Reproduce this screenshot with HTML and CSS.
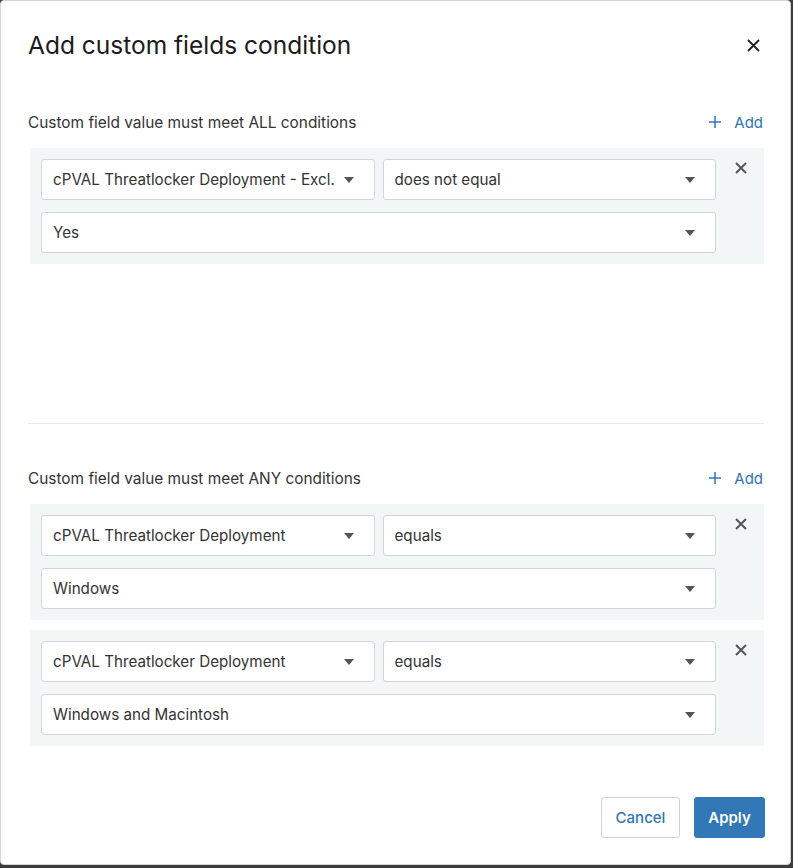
FILE: index.html
```html
<!DOCTYPE html>
<html>
<head>
<meta charset="utf-8">
<link rel="stylesheet" href="styles.css">
</head>
<body>
<div class="dialog">
  <div class="header">
    <h1 class="title">Add custom fields condition</h1>
    <button class="close" aria-label="Close">
      <svg width="13" height="13" viewBox="0 0 13 13"><path d="M1 1L12 12M12 1L1 12" stroke="#222" stroke-width="1.8" fill="none"/></svg>
    </button>
  </div>

  <section class="section section-all">
    <div class="section-head">
      <span class="label">Custom field value must meet ALL conditions</span>
      <a class="add"><svg width="14" height="14" viewBox="0 0 14 14"><path d="M7 1V13M1 7H13" stroke="#2f75b5" stroke-width="1.5" fill="none"/></svg><span>Add</span></a>
    </div>
    <div class="panel">
      <div class="fields">
        <div class="row">
          <div class="select"><span class="text">cPVAL Threatlocker Deployment - Excl.</span><span class="caret"></span></div>
          <div class="select"><span class="text">does not equal</span><span class="caret"></span></div>
        </div>
        <div class="select"><span class="text">Yes</span><span class="caret"></span></div>
      </div>
      <div class="remove"><svg width="12" height="12" viewBox="0 0 12 12"><path d="M1 1L11 11M11 1L1 11" stroke="#555" stroke-width="2" fill="none"/></svg></div>
    </div>
  </section>

  <hr class="divider">

  <section class="section section-any">
    <div class="section-head">
      <span class="label">Custom field value must meet ANY conditions</span>
      <a class="add"><svg width="14" height="14" viewBox="0 0 14 14"><path d="M7 1V13M1 7H13" stroke="#2f75b5" stroke-width="1.5" fill="none"/></svg><span>Add</span></a>
    </div>
    <div class="panel">
      <div class="fields">
        <div class="row">
          <div class="select"><span class="text">cPVAL Threatlocker Deployment</span><span class="caret"></span></div>
          <div class="select"><span class="text">equals</span><span class="caret"></span></div>
        </div>
        <div class="select"><span class="text">Windows</span><span class="caret"></span></div>
      </div>
      <div class="remove"><svg width="12" height="12" viewBox="0 0 12 12"><path d="M1 1L11 11M11 1L1 11" stroke="#555" stroke-width="2" fill="none"/></svg></div>
    </div>
    <div class="panel">
      <div class="fields">
        <div class="row">
          <div class="select"><span class="text">cPVAL Threatlocker Deployment</span><span class="caret"></span></div>
          <div class="select"><span class="text">equals</span><span class="caret"></span></div>
        </div>
        <div class="select"><span class="text">Windows and Macintosh</span><span class="caret"></span></div>
      </div>
      <div class="remove"><svg width="12" height="12" viewBox="0 0 12 12"><path d="M1 1L11 11M11 1L1 11" stroke="#555" stroke-width="2" fill="none"/></svg></div>
    </div>
  </section>

  <div class="footer">
    <button class="btn btn-cancel">Cancel</button>
    <button class="btn btn-apply">Apply</button>
  </div>
</div>
</body>
</html>
```

FILE: styles.css
```css
* { box-sizing: border-box; }
html, body { margin: 0; padding: 0; }
body {
  background: #3c3c3c;
  width: 793px;
  height: 868px;
  font-family: Inter, "Noto Sans", "Liberation Sans", sans-serif;
  color: #222;
}
.dialog {
  width: 791px;
  height: 865px;
  background: #fff;
  border: 1px solid #d4d4d4;
  border-radius: 4px;
  padding: 0 26px 0 27px;
  display: flex;
  flex-direction: column;
}
.header {
  display: flex;
  justify-content: space-between;
  align-items: center;
  height: 90px;
  padding-bottom: 2px;
}
.title {
  margin: 0;
  font-size: 24.5px;
  font-weight: 400;
  color: #1a1a1a;
}
.close {
  background: none;
  border: 0;
  padding: 0;
  margin-right: 4px;
  display: flex;
  cursor: pointer;
}
.section-head {
  display: flex;
  justify-content: space-between;
  align-items: center;
  height: 24px;
  margin-bottom: 14px;
}
.label {
  font-size: 15.4px;
  color: #333;
}
.add {
  display: flex;
  align-items: center;
  gap: 12px;
  color: #2f75b5;
  font-size: 15px;
  margin-right: 1px;
}
.section-all {
  padding-top: 19px;
  height: 332px;
}
.divider {
  margin: 0;
  border: 0;
  border-top: 1px solid #e6e9eb;
}
.section-any {
  padding-top: 42px;
}
.panel {
  display: flex;
  background: #f3f6f7;
  margin-left: 2px;
  padding: 11px 0 11px 11px;
  margin-bottom: 10px;
}
.fields {
  width: 675px;
  display: flex;
  flex-direction: column;
  gap: 12px;
}
.row {
  display: flex;
  gap: 8px;
}
.row .select { flex: 1; }
.select {
  height: 41px;
  background: #fff;
  border: 1px solid #d2d5d8;
  border-radius: 3px;
  display: flex;
  align-items: center;
  padding: 0 20px 0 11px;
  font-size: 15.2px;
  color: #333;
}
.text {
  flex: 1;
  white-space: nowrap;
  overflow: hidden;
}
.caret {
  width: 0;
  height: 0;
  border-left: 5.5px solid transparent;
  border-right: 5.5px solid transparent;
  border-top: 6px solid #555;
  margin-left: 6px;
}
.remove {
  width: 48px;
  display: flex;
  justify-content: center;
  padding-top: 3px;
  height: 18px;
  padding-left: 2px;
}
.footer {
  margin-top: auto;
  margin-right: -1px;
  display: flex;
  justify-content: flex-end;
  gap: 14px;
  padding-bottom: 26px;
}
.btn {
  height: 41px;
  font-family: inherit;
  font-size: 15px;
  border-radius: 3px;
  cursor: pointer;
}
.btn-cancel {
  width: 79px;
  background: #fff;
  border: 1px solid #cfd3d6;
  color: #2f75b5;
  font-weight: 500;
}
.btn-apply {
  width: 71px;
  background: #3277b6;
  border: 1px solid #3277b6;
  color: #fff;
  font-weight: 600;
}
```
